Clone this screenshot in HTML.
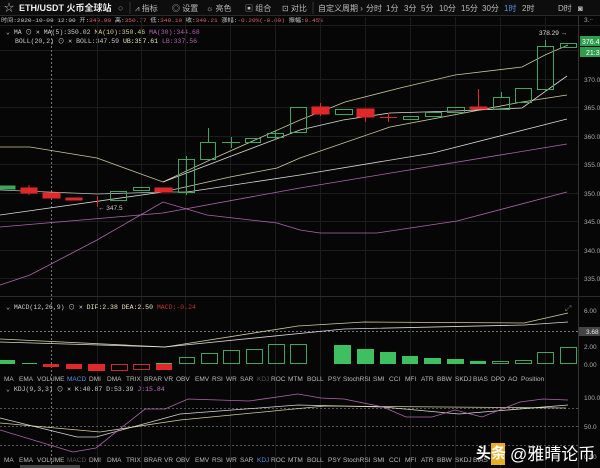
<!DOCTYPE html>
<html><head><meta charset="utf-8"><style>
body{margin:0;background:#060606;width:600px;height:468px;overflow:hidden}
svg{display:block}
text{font-family:"Liberation Sans","Noto Sans CJK SC",sans-serif}
.m{font-family:"Liberation Mono","Noto Sans CJK SC",monospace;font-size:6.5px}
polyline{stroke-width:0.8;opacity:0.9}
</style></head><body>
<svg width="600" height="468" viewBox="0 0 600 468">
<rect width="600" height="468" fill="#060606"/>
<rect x="0" y="0" width="600" height="15" fill="#0d0d0d"/>
<line x1="0" y1="15.5" x2="600" y2="15.5" stroke="#2a2a2a"/>
<text x="4" y="11" fill="#bbb" font-size="10">☆</text>
<text x="19" y="11" fill="#eee" font-size="9" font-weight="bold">ETH/USDT 火币全球站</text>
<text x="118" y="11" fill="#999" font-size="9">○</text>
<g fill="#bbb" font-size="8">
<text x="135" y="11">⩘ 指标</text><text x="172" y="11">◎ 设置</text><text x="206" y="11">☼ 亮色</text><text x="245" y="11">▣ 组合</text><text x="282" y="11">⊡ 对比</text>
<text x="318" y="11">自定义周期 ›</text><text x="366" y="11">分时</text><text x="386" y="11">1分</text><text x="404" y="11">3分</text><text x="421" y="11">5分</text><text x="439" y="11">10分</text><text x="461" y="11">15分</text><text x="482" y="11">30分</text><text x="504" y="11" fill="#5b8fe0">1时</text><text x="522" y="11">2时</text><text x="558" y="11">D时</text><text x="578" y="11">◙</text>
</g>
<line x1="130" y1="2" x2="130" y2="14" stroke="#333"/>
<line x1="313" y1="2" x2="313" y2="14" stroke="#333"/>
<text class="m" x="1" y="22" fill="#ccc" style="font-size:5.9px" textLength="322" lengthAdjust="spacingAndGlyphs">时间:2020-10-09 12:00 开:<tspan fill="#e06060">349.90</tspan> 高:<tspan fill="#e06060">350.77</tspan> 低:<tspan fill="#e06060">349.19</tspan> 收:<tspan fill="#e06060">349.21</tspan> 涨幅:<tspan fill="#e06060">-0.20%(-0.69)</tspan> 振幅:<tspan fill="#e06060">0.45%</tspan></text>
<line x1="0" y1="25.5" x2="600" y2="25.5" stroke="#1e1e1e"/>
<text class="m" x="6" y="34" fill="#ccc">⌄ MA  ⊙ ✕  MA(5):350.02 <tspan fill="#d8d090">MA(10):350.46</tspan> <tspan fill="#b060b0">MA(30):344.68</tspan></text>
<text class="m" x="15" y="43" fill="#ccc">BOLL(20,2) ⊙ ✕  BOLL:347.59 <tspan fill="#e8e8c0">UB:357.61</tspan> <tspan fill="#b060b0">LB:337.56</tspan></text>
<g stroke="#1c1c1c" stroke-width="1">
<line x1="0" y1="50.5" x2="578" y2="50.5"/><line x1="0" y1="79.5" x2="578" y2="79.5"/><line x1="0" y1="107.5" x2="578" y2="107.5"/><line x1="0" y1="136.5" x2="578" y2="136.5"/><line x1="0" y1="164.5" x2="578" y2="164.5"/><line x1="0" y1="193.5" x2="578" y2="193.5"/><line x1="0" y1="221.5" x2="578" y2="221.5"/><line x1="0" y1="250.5" x2="578" y2="250.5"/><line x1="0" y1="278.5" x2="578" y2="278.5"/>
<line x1="97.5" y1="17" x2="97.5" y2="468"/><line x1="141.5" y1="17" x2="141.5" y2="468"/><line x1="185.5" y1="17" x2="185.5" y2="468"/><line x1="230.5" y1="17" x2="230.5" y2="468"/><line x1="275.5" y1="17" x2="275.5" y2="468"/><line x1="320.5" y1="17" x2="320.5" y2="468"/><line x1="365.5" y1="17" x2="365.5" y2="468"/><line x1="410.5" y1="17" x2="410.5" y2="468"/><line x1="455.5" y1="17" x2="455.5" y2="468"/><line x1="500.5" y1="17" x2="500.5" y2="468"/><line x1="545.5" y1="17" x2="545.5" y2="468"/>
</g>
<line x1="51.5" y1="26" x2="51.5" y2="468" stroke="#777" stroke-dasharray="2,2"/>
<line x1="578.5" y1="16" x2="578.5" y2="468" stroke="#333"/>
<line x1="0" y1="296.5" x2="600" y2="296.5" stroke="#2a2a2a"/>
<g fill="#aaa" font-size="6.5" font-family="Liberation Sans">
<text x="584" y="82">370.0</text><text x="584" y="110">365.0</text><text x="584" y="139">360.0</text><text x="584" y="167">355.0</text><text x="584" y="196">350.0</text><text x="584" y="224">345.0</text><text x="584" y="253">340.0</text><text x="584" y="281">335.0</text><text x="584" y="22">3.ᐧᐧ</text>
</g>
<rect x="580" y="36" width="20" height="10" fill="#2e9e4e"/><text x="582" y="44" fill="#fff" font-size="7">376.4</text>
<rect x="580" y="47" width="20" height="10" fill="#2e9e4e"/><text x="586" y="55" fill="#fff" font-size="7">21:3</text>
<text x="539" y="35" fill="#ddd" font-size="6.5">378.29 →</text>
<text x="98" y="210" fill="#ccc" font-size="6.5">← 347.5</text>
<g fill="none">
<polyline stroke="#e0dca8" points="0,147 30,147 97,158 163,182 210,160 300,120 345,102 400,88 455,75 522,67 545,55 568,45"/>
<polyline stroke="#f0f0f0" points="163,182 300,130 343,120 390,113 455,111 522,108 567,76"/>
<polyline stroke="#e8e4b0" points="163,192 230,177 277,168 300,158 390,127 522,102 567,95"/>
<polyline stroke="#f0f0f0" points="187,192 300,175 433,153 567,119"/>
<polyline stroke="#eee" points="0,215 163,192"/>
<polyline stroke="#ccc" points="0,190 97,194 163,192 187,192"/>
<polyline stroke="#c070c0" points="0,227 163,213 300,188 567,144"/>
<polyline stroke="#c070c0" points="0,285 30,275 97,240 163,202 207,215 277,223 300,230 320,233 377,233 457,221 567,192"/>
</g>
<g stroke="#3ea65e" fill="none" stroke-width="1">
<rect x="0" y="186" width="15" height="3" fill="#3ea65e"/>
<rect x="110.5" y="191.5" width="16" height="9"/>
<rect x="133.5" y="187.5" width="16" height="3"/>
<rect x="178.5" y="159.5" width="16" height="33"/><line x1="186.5" y1="156" x2="186.5" y2="195"/>
<rect x="200.5" y="142.5" width="15" height="17"/><line x1="208.5" y1="128" x2="208.5" y2="142"/>
<line x1="222" y1="142.5" x2="240" y2="142.5"/><line x1="231.5" y1="137" x2="231.5" y2="148"/>
<rect x="245.5" y="138.5" width="15" height="4"/>
<rect x="267.5" y="133.5" width="16" height="4"/><line x1="275.5" y1="130" x2="275.5" y2="140"/>
<rect x="290.5" y="107.5" width="16" height="25"/>
<rect x="335.5" y="109.5" width="17" height="5"/>
<rect x="403.5" y="116.5" width="15" height="3"/>
<rect x="425.5" y="112.5" width="16" height="4"/>
<rect x="447.5" y="107.5" width="17" height="5"/>
<rect x="493.5" y="97.5" width="16" height="12"/><line x1="501.5" y1="92" x2="501.5" y2="97"/>
<rect x="515.5" y="88.5" width="16" height="14"/>
<rect x="537.5" y="46.5" width="16" height="43"/><line x1="545.5" y1="40" x2="545.5" y2="46"/><line x1="545.5" y1="89" x2="545.5" y2="92"/>
<rect x="560.5" y="43.5" width="16" height="4"/>
</g>
<g fill="#e02828" stroke="#e02828">
<rect x="21" y="188" width="16" height="5"/><line x1="29" y1="185" x2="29" y2="195"/>
<rect x="43" y="193" width="17" height="5"/>
<rect x="66" y="198" width="16" height="2"/>
<line x1="97.5" y1="196" x2="97.5" y2="207"/>
<rect x="155" y="188" width="17" height="4"/>
<rect x="312" y="107" width="17" height="7"/><line x1="320.5" y1="103" x2="320.5" y2="116"/>
<rect x="357" y="109" width="17" height="8"/><line x1="365.5" y1="117" x2="365.5" y2="122"/>
<line x1="380" y1="117.5" x2="397" y2="117.5"/><line x1="388.5" y1="113" x2="388.5" y2="122"/>
<rect x="470" y="107" width="17" height="2"/><line x1="478.5" y1="89" x2="478.5" y2="107"/>
</g>
<text class="m" x="6" y="309" fill="#ccc">⌄ MACD(12,26,9) ⊙ ✕  <tspan fill="#e8e8c0">DIF:2.38</tspan>  <tspan fill="#e8e8c0">DEA:2.50</tspan>  <tspan fill="#c03030">MACD:-0.24</tspan></text>
<line x1="0" y1="331.5" x2="578" y2="331.5" stroke="#777" stroke-dasharray="2,2"/>
<g fill="#aaa" font-size="6.5"><text x="584" y="313">6.00</text><text x="584" y="349">2.00</text><text x="584" y="367">0.00</text></g>
<rect x="579" y="327" width="21" height="9" fill="#444"/><text x="586" y="334" fill="#eee" font-size="6.5">3.68</text>
<text x="565" y="311" fill="#777" font-size="8">⤢</text>
<g fill="#3ec060">
<rect x="0" y="360" width="15" height="4"/><rect x="22" y="363" width="15" height="1"/><rect x="156" y="363" width="16" height="1"/>
<rect x="334" y="345" width="17" height="19"/><rect x="357" y="349" width="17" height="15"/><rect x="380" y="352" width="16" height="12"/><rect x="402" y="356" width="16" height="8"/><rect x="424" y="358" width="17" height="6"/><rect x="447" y="359" width="17" height="5"/><rect x="470" y="361" width="16" height="3"/>
</g>
<g fill="none" stroke="#3ea65e">
<rect x="179.5" y="357.5" width="15" height="6"/><rect x="201.5" y="353.5" width="16" height="10"/><rect x="223.5" y="350.5" width="16" height="13"/><rect x="246.5" y="349.5" width="16" height="14"/><rect x="268.5" y="344.5" width="16" height="19"/><rect x="290.5" y="344.5" width="16" height="19"/>
<rect x="492.5" y="361.5" width="16" height="2"/><rect x="515.5" y="360.5" width="16" height="3"/><rect x="537.5" y="352.5" width="16" height="11"/><rect x="560.5" y="347.5" width="16" height="16"/>
</g>
<g fill="#e02828"><rect x="43" y="364" width="16" height="3"/><rect x="66" y="364" width="16" height="5"/><rect x="88" y="364" width="17" height="7"/><rect x="156" y="364" width="16" height="6"/></g>
<g fill="none" stroke="#c03030"><rect x="111.5" y="364.5" width="16" height="6"/><rect x="133.5" y="364.5" width="16" height="5"/></g>
<polyline fill="none" stroke="#e8e4b0" points="0,339 165,347 298,326 364,322 524,323 568,313"/>
<polyline fill="none" stroke="#eee" points="0,342 165,347 344,329 524,325 568,322"/>
<g fill="#bbb" font-size="6.5">
<text x="4" y="381">MA</text><text x="19" y="381">EMA</text><text x="37" y="381">VOLUME</text><text x="67" y="381" fill="#5b8fe0">MACD</text><text x="89" y="381">DMI</text><text x="107" y="381">DMA</text><text x="126" y="381">TRIX</text><text x="144" y="381">BRAR</text><text x="164" y="381">VR</text><text x="176" y="381">OBV</text><text x="195" y="381">EMV</text><text x="212" y="381">RSI</text><text x="226" y="381">WR</text><text x="240" y="381">SAR</text><text x="257" y="381" fill="#555">KDJ</text><text x="271" y="381">ROC</text><text x="288" y="381">MTM</text><text x="307" y="381">BOLL</text><text x="328" y="381">PSY</text><text x="343" y="381">StochRSI</text><text x="373" y="381">SMI</text><text x="389" y="381">CCI</text><text x="405" y="381">MFI</text><text x="421" y="381">ATR</text><text x="437" y="381">BBW</text><text x="455" y="381">SKDJ</text><text x="473" y="381">BIAS</text><text x="491" y="381">DPO</text><text x="508" y="381">AO</text><text x="521" y="381">Position</text>
</g>
<text class="m" x="6" y="391" fill="#ccc">⌄ KDJ(9,3,3) ⊙ ✕  K:40.87  D:53.39  <tspan fill="#c070c0">J:15.84</tspan></text>
<line x1="0" y1="408.5" x2="578" y2="408.5" stroke="#555" stroke-dasharray="2,2"/>
<line x1="0" y1="426.5" x2="578" y2="426.5" stroke="#555" stroke-dasharray="2,2"/>
<line x1="0" y1="445.5" x2="578" y2="445.5" stroke="#555" stroke-dasharray="2,2"/>
<g fill="#aaa" font-size="6.5"><text x="584" y="400">100.0</text><text x="584" y="429">50.0</text><text x="584" y="459">0.00</text></g>
<polyline fill="none" stroke="#eee" points="0,418 77,437 96,437 180,414 298,405 383,407 459,414 568,405"/>
<polyline fill="none" stroke="#e8e4b0" points="0,423 100,432 180,420 325,406 566,408"/>
<polyline fill="none" stroke="#c070c0" points="0,430 73,452 96,448 145,409 165,409 188,399 249,401 298,394 321,398 344,399 383,407 406,417 432,417 455,410 482,417 520,402 543,399 568,400"/>
<g fill="#bbb" font-size="6.5">
<text x="4" y="462">MA</text><text x="19" y="462">EMA</text><text x="37" y="462">VOLUME</text><text x="67" y="462" fill="#555">MACD</text><text x="89" y="462">DMI</text><text x="107" y="462">DMA</text><text x="126" y="462">TRIX</text><text x="144" y="462">BRAR</text><text x="164" y="462">VR</text><text x="176" y="462">OBV</text><text x="195" y="462">EMV</text><text x="212" y="462">RSI</text><text x="226" y="462">WR</text><text x="240" y="462">SAR</text><text x="257" y="462" fill="#5b8fe0">KDJ</text><text x="271" y="462">ROC</text><text x="288" y="462">MTM</text><text x="307" y="462">BOLL</text><text x="328" y="462">PSY</text><text x="343" y="462">StochRSI</text><text x="373" y="462">SMI</text><text x="389" y="462">CCI</text><text x="405" y="462">MFI</text><text x="421" y="462">ATR</text><text x="437" y="462">BBW</text><text x="455" y="462">SKDJ</text><text x="473" y="462">BIAS</text>
</g>
<rect x="20" y="465" width="60" height="3" fill="#444"/>
<rect x="491" y="443" width="14" height="22" fill="#e8b020"/>
<text x="476" y="458" fill="#fff" font-size="15" font-weight="bold">头条</text>
<text x="510" y="460" fill="#fff" font-size="17">@雅晴论币</text>
</svg>
</body></html>
